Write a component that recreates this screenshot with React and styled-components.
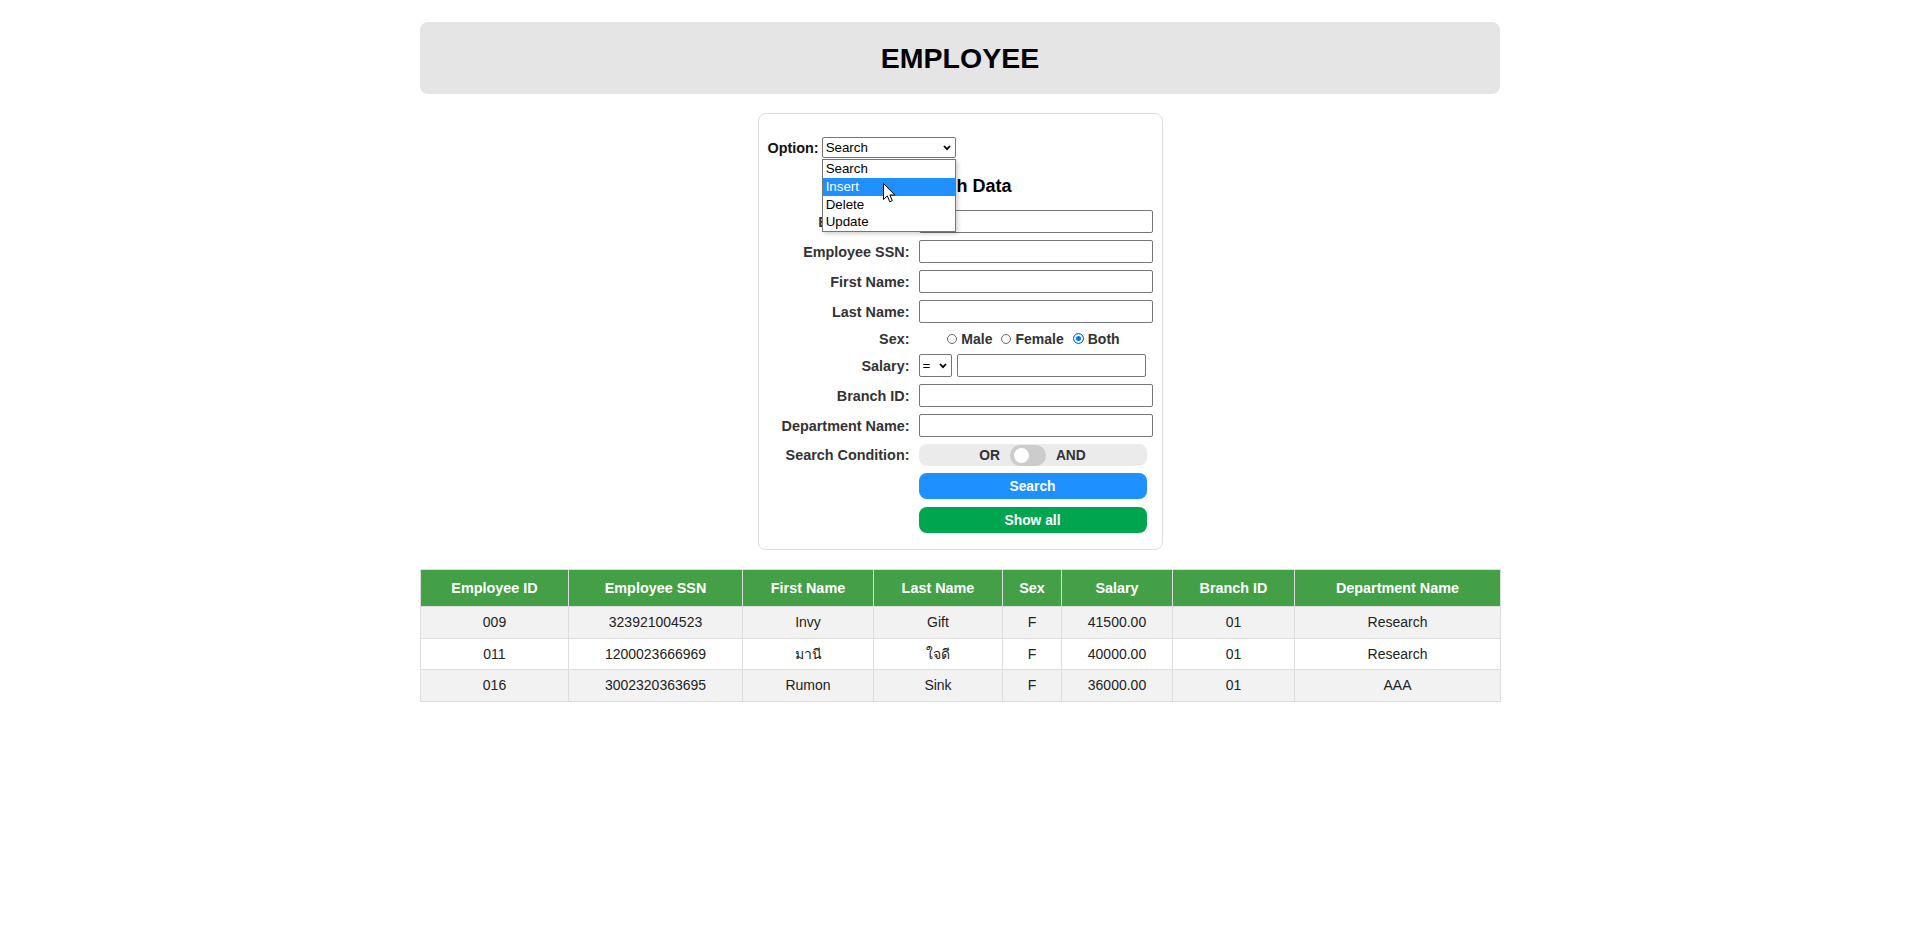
import styled, { createGlobalStyle } from 'styled-components';

const GlobalStyle = createGlobalStyle`
  body {
    margin: 0;
    background: #fff;
    font-family: "Liberation Sans", Arial, "Noto Sans", sans-serif;
    color: #000;
  }
`;

const Page = styled.div`
  width: 1080px;
  margin: 22px auto 0;
`;
const Header = styled.header`
  height: 72px;
  background: #e5e5e5;
  border-radius: 8px;
  display: flex;
  align-items: center;
  justify-content: center;
`;
const Title = styled.h1`
  margin: 0;
  font-size: 28.5px;
  font-weight: bold;
  color: #000;
`;
const Card = styled.div`
  box-sizing: border-box;
  width: 405px;
  margin: 19px auto 0;
  padding: 23px 10px 16px 9px;
  border: 1px solid #ddd;
  border-radius: 8px;
`;
const OptionRow = styled.div`
  display: flex;
  align-items: center;
  gap: 3px;
  height: 21px;
`;
const OptionLabel = styled.label`
  font-size: 14.4px;
  font-weight: bold;
  color: #111;
`;
const SelectWrap = styled.div`
  position: relative;
  width: ${(p) => p.$w}px;
  height: ${(p) => p.$h}px;
  flex: none;
`;
const Select = styled.select`
  appearance: none;
  box-sizing: border-box;
  width: 100%;
  height: 100%;
  margin: 0;
  padding: 0 0 0 3px;
  border: 1px solid #767676;
  border-radius: 2px;
  background: #fff;
  font-family: "Liberation Sans", Arial, sans-serif;
  font-size: 13.33px;
  color: #000;
  outline: none;
`;
const Chevron = styled.svg`
  position: absolute;
  right: 5px;
  top: 50%;
  margin-top: -3px;
  pointer-events: none;
`;
const Dropdown = styled.ul`
  position: absolute;
  top: calc(100% + 1px);
  left: 0;
  z-index: 5;
  box-sizing: border-box;
  width: 100%;
  margin: 0;
  padding: 0;
  list-style: none;
  background: #fff;
  border: 1px solid #767676;
  box-shadow: 2px 2px 4px rgba(0, 0, 0, 0.18);
`;
const DropItem = styled.li`
  height: 17.75px;
  line-height: 17.75px;
  padding-left: 3px;
  font-size: 13.33px;
  background: ${(p) => (p.$active ? '#1e90ff' : '#fff')};
  color: ${(p) => (p.$active ? '#fff' : '#000')};
`;
const Cursor = styled.svg`
  position: absolute;
  left: 60px;
  top: 23px;
`;
const Heading = styled.h3`
  margin: 18px 0 13px;
  font-size: 18px;
  line-height: 21px;
  font-weight: bold;
  text-align: center;
`;
const Form = styled.div`
  display: grid;
  grid-template-columns: 142px 234px;
  column-gap: 9px;
  row-gap: 7px;
  align-items: center;
`;
const Label = styled.label`
  text-align: right;
  font-size: 14.4px;
  font-weight: bold;
  color: #333;
  white-space: nowrap;
`;
const TextInput = styled.input`
  box-sizing: border-box;
  width: ${(p) => p.$w || 234}px;
  height: 23px;
  margin: 0;
  border: 1px solid #767676;
  border-radius: 2px;
  background: #fff;
  outline: none;
`;
const RadioGroup = styled.div`
  width: 230px;
  height: 17px;
  display: flex;
  align-items: center;
  justify-content: center;
  gap: 9px;
`;
const RadioOption = styled.label`
  display: flex;
  align-items: center;
  gap: 4px;
  font-size: 14px;
  font-weight: bold;
  color: #333;
`;
const Radio = styled.input`
  appearance: none;
  box-sizing: border-box;
  width: 10px;
  height: 10px;
  margin: 0;
  border-radius: 50%;
  border: 1px solid #666;
  background: #fff;
  &:checked {
    width: 11px;
    height: 11px;
    border-color: #0075ff;
    background: #0075ff;
    box-shadow: inset 0 0 0 2px #fff;
  }
`;
const SalaryRow = styled.div`
  display: flex;
  gap: 5px;
`;
const Toggle = styled.div`
  width: 228px;
  height: 22px;
  border-radius: 8px;
  background: #ebebeb;
  display: flex;
  align-items: center;
  justify-content: center;
  gap: 10px;
  font-size: 13.8px;
  font-weight: bold;
  color: #333;
`;
const Track = styled.div`
  box-sizing: border-box;
  width: 36px;
  height: 21px;
  border-radius: 11px;
  background: #ccc;
  display: flex;
  align-items: center;
  padding-left: 4px;
`;
const Knob = styled.div`
  width: 15px;
  height: 15px;
  border-radius: 50%;
  background: #fff;
`;
const Button = styled.button`
  width: 228px;
  height: 26px;
  margin: ${(p) => (p.$extra ? '1px 0 0' : '0')};
  border: none;
  border-radius: 8px;
  background: ${(p) => p.$bg};
  color: #fff;
  font-family: "Liberation Sans", Arial, sans-serif;
  font-size: 13.8px;
  font-weight: bold;
  cursor: pointer;
`;
const Table = styled.table`
  width: 1080px;
  margin-top: 19px;
  border-collapse: collapse;
  table-layout: fixed;
  border: 1px solid #ddd;
`;
const Th = styled.th`
  height: 36px;
  padding: 0 6px;
  background: #43a047;
  color: #fff;
  font-size: 14.4px;
  font-weight: bold;
  border: 1px solid #ddd;
  text-align: center;
`;
const Td = styled.td`
  height: 30.5px;
  padding: 0 6px;
  font-size: 14px;
  color: #222;
  text-align: center;
  border: 1px solid #ddd;
`;
const Row = styled.tr`
  background: ${(p) => (p.$odd ? '#f2f2f2' : '#fff')};
`;

const columns = [
  ['Employee ID', 148],
  ['Employee SSN', 174],
  ['First Name', 131],
  ['Last Name', 129],
  ['Sex', 59],
  ['Salary', 111],
  ['Branch ID', 122],
  ['Department Name', 206],
];

const employees = [
  ['009', '323921004523', 'Invy', 'Gift', 'F', '41500.00', '01', 'Research'],
  ['011', '1200023666969', 'มานี', 'ใจดี', 'F', '40000.00', '01', 'Research'],
  ['016', '3002320363695', 'Rumon', 'Sink', 'F', '36000.00', '01', 'AAA'],
];

function ChevronIcon() {
  return (
    <Chevron width="8" height="6" viewBox="0 0 8 6">
      <path d="M1 1 L4 4.2 L7 1" fill="none" stroke="#000" strokeWidth="1.8" />
    </Chevron>
  );
}

function App() {
  return (
    <>
      <GlobalStyle />
      <Page>
        <Header>
          <Title>EMPLOYEE</Title>
        </Header>

        <Card>
          <OptionRow>
            <OptionLabel>Option:</OptionLabel>
            <SelectWrap $w={134} $h={21}>
              <Select defaultValue="Search">
                <option>Search</option>
                <option>Insert</option>
                <option>Delete</option>
                <option>Update</option>
              </Select>
              <ChevronIcon />
              <Dropdown>
                <DropItem>Search</DropItem>
                <DropItem $active>Insert</DropItem>
                <DropItem>Delete</DropItem>
                <DropItem>Update</DropItem>
                <Cursor width="13" height="21" viewBox="0 0 13 21">
                  <path
                    d="M0.5 0.5 L0.5 16.5 L4.3 12.9 L6.8 18.8 L9.3 17.7 L6.9 12 L11.8 12 Z"
                    fill="#fff"
                    stroke="#000"
                    strokeWidth="1"
                    strokeLinejoin="round"
                  />
                </Cursor>
              </Dropdown>
            </SelectWrap>
          </OptionRow>

          <Heading>Search Data</Heading>

          <Form>
            <Label>Employee ID:</Label>
            <TextInput />
            <Label>Employee SSN:</Label>
            <TextInput />
            <Label>First Name:</Label>
            <TextInput />
            <Label>Last Name:</Label>
            <TextInput />
            <Label>Sex:</Label>
            <RadioGroup>
              <RadioOption>
                <Radio type="radio" name="sex" />
                Male
              </RadioOption>
              <RadioOption>
                <Radio type="radio" name="sex" />
                Female
              </RadioOption>
              <RadioOption>
                <Radio type="radio" name="sex" defaultChecked />
                Both
              </RadioOption>
            </RadioGroup>
            <Label>Salary:</Label>
            <SalaryRow>
              <SelectWrap $w={33} $h={23}>
                <Select defaultValue="=">
                  <option>=</option>
                  <option>&gt;</option>
                  <option>&lt;</option>
                </Select>
                <ChevronIcon />
              </SelectWrap>
              <TextInput $w={189} />
            </SalaryRow>
            <Label>Branch ID:</Label>
            <TextInput />
            <Label>Department Name:</Label>
            <TextInput />
            <Label>Search Condition:</Label>
            <Toggle>
              <span>OR</span>
              <Track>
                <Knob />
              </Track>
              <span>AND</span>
            </Toggle>
            <span />
            <Button $bg="#1e90ff">Search</Button>
            <span />
            <Button $bg="#00a550" $extra>
              Show all
            </Button>
          </Form>
        </Card>

        <Table>
          <colgroup>
            {columns.map(([name, w]) => (
              <col key={name} style={{ width: w }} />
            ))}
          </colgroup>
          <thead>
            <tr>
              {columns.map(([name]) => (
                <Th key={name}>{name}</Th>
              ))}
            </tr>
          </thead>
          <tbody>
            {employees.map((emp, i) => (
              <Row key={emp[0]} $odd={i % 2 === 0}>
                {emp.map((cell, j) => (
                  <Td key={j}>{cell}</Td>
                ))}
              </Row>
            ))}
          </tbody>
        </Table>
      </Page>
    </>
  );
}

export default App;
